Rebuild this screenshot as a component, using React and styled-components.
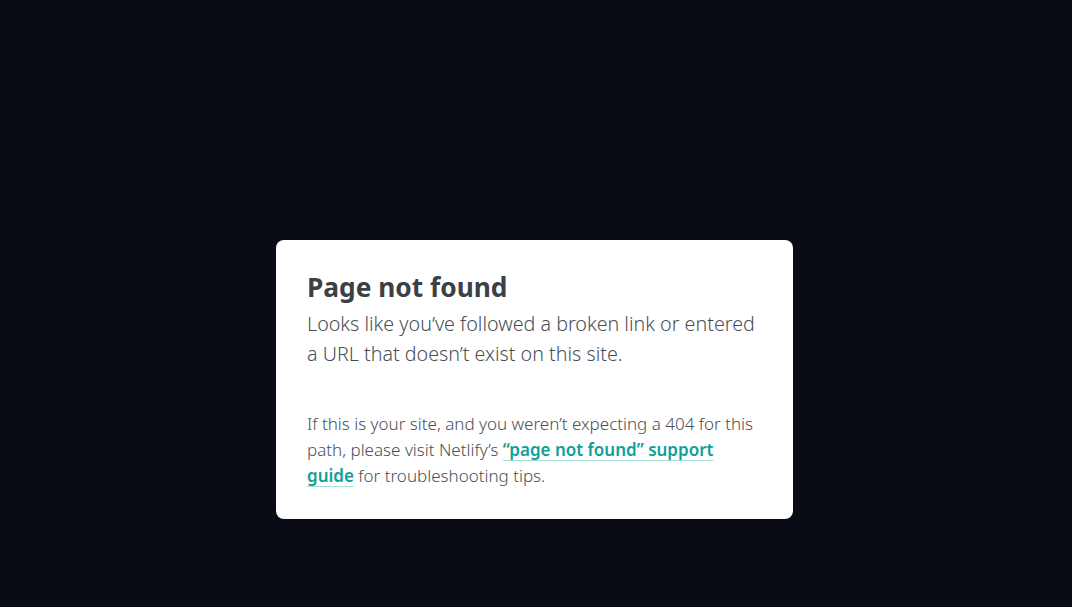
import React from 'react';
import styled, { createGlobalStyle } from 'styled-components';

const GlobalStyle = createGlobalStyle`
  html, body {
    margin: 0;
    padding: 0;
    background-color: #090c14;
  }
  body {
    font-family: "Noto Sans", "Open Sans", sans-serif;
    -webkit-font-smoothing: antialiased;
  }
`;

const Page = styled.main`
  min-height: 607px;
  box-sizing: border-box;
  padding: 240px 3px 0 0;
  display: flex;
  justify-content: center;
  align-items: flex-start;
`;

const Card = styled.div`
  width: 517px;
  box-sizing: border-box;
  background-color: #fff;
  border-radius: 8px;
  padding: 29px 31px 30px;
  color: #3f444b;
`;

const Title = styled.h1`
  margin: 0;
  font-size: 26.3px;
  line-height: 36px;
  font-weight: 700;
  color: #3b4046;
`;

const Lead = styled.p`
  margin: 4px 0 0;
  font-size: 19.7px;
  line-height: 30px;
  font-weight: 300;
  color: #4a4f56;
`;

const Note = styled.p`
  margin: 42px 0 0;
  font-size: 17px;
  line-height: 26px;
  font-weight: 300;
  color: #4a4f56;
`;

const Link = styled.a`
  color: #0e9f9a;
  font-weight: 600;
  text-decoration: underline;
  text-decoration-color: #a9dedc;
  text-decoration-thickness: 1px;
  text-underline-offset: 4px;
`;

export default function App() {
  return (
    <>
      <GlobalStyle />
      <Page>
        <Card>
          <Title>Page not found</Title>
          <Lead>
            Looks like you’ve followed a broken link or entered a URL that doesn’t exist on this site.
          </Lead>
          <Note>
            If this is your site, and you weren’t expecting a 404 for this path, please visit
            Netlify’s <Link href="#">“page not found” support guide</Link> for troubleshooting tips.
          </Note>
        </Card>
      </Page>
    </>
  );
}
